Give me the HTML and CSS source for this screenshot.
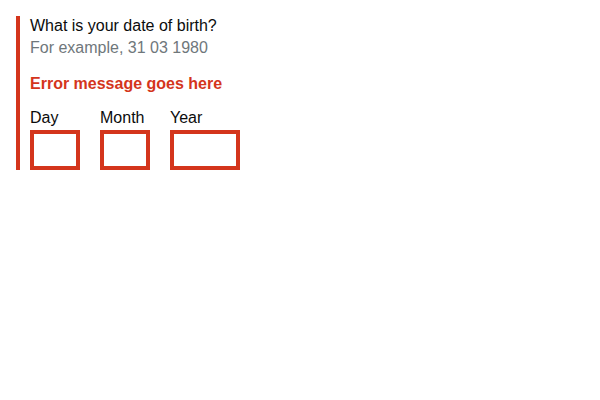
FILE: index.html
```html
<!DOCTYPE html>
<html lang="en">
<head>
<meta charset="utf-8">
<title>Date input</title>
<link rel="stylesheet" href="styles.css">
</head>
<body>
  <div class="form-group form-group--error">
    <fieldset class="fieldset">
      <legend class="legend">What is your date of birth?</legend>
      <div class="hint">For example, 31 03 1980</div>
      <p class="error-message">Error message goes here</p>
      <div class="date-input">
        <div class="date-item">
          <label class="label" for="d">Day</label>
          <input class="input input--2" id="d" type="text">
        </div>
        <div class="date-item">
          <label class="label" for="m">Month</label>
          <input class="input input--2" id="m" type="text">
        </div>
        <div class="date-item">
          <label class="label" for="y">Year</label>
          <input class="input input--4" id="y" type="text">
        </div>
      </div>
    </fieldset>
  </div>
</body>
</html>
```

FILE: styles.css
```css
html, body {
  margin: 0;
  padding: 0;
  background: #ffffff;
}
body {
  padding: 16px;
  font-family: "Liberation Sans", Arial, sans-serif;
  font-size: 16px;
  line-height: 20px;
  color: #0b0c0c;
}
.form-group--error {
  border-left: 4px solid #d4351c;
  padding-left: 10px;
}
.fieldset {
  margin: 0;
  padding: 0;
  border: 0;
  min-width: 0;
}
.legend {
  padding: 0;
  margin: 0 0 2px 0;
  display: block;
}
.hint {
  color: #6f777b;
  margin: 0 0 16px 0;
}
.error-message {
  margin: 0 0 14px 0;
  color: #d4351c;
  font-weight: 700;
}
.date-input {
  display: flex;
  gap: 20px;
}
.date-item {
  display: flex;
  flex-direction: column;
}
.label {
  display: block;
  margin-bottom: 2px;
}
.input {
  box-sizing: border-box;
  height: 40px;
  margin: 0;
  padding: 5px;
  border: 4px solid #d4351c;
  border-radius: 0;
  background: #ffffff;
  font: inherit;
  outline: none;
}
.input--2 { width: 50px; }
.input--4 { width: 70px; }
```
